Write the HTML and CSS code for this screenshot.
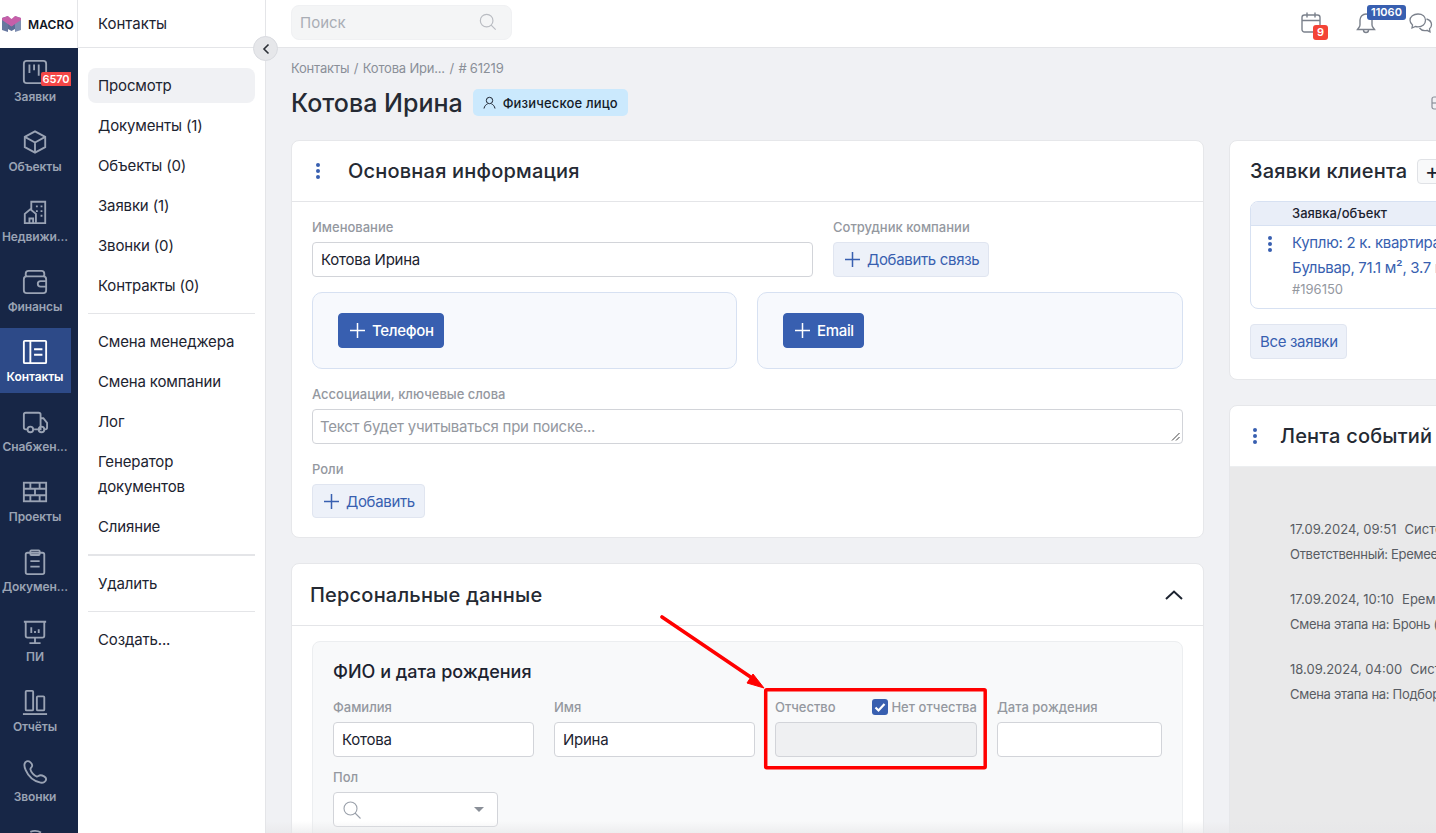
FILE: index.html
```html
<!DOCTYPE html>
<html lang="ru">
<head>
<meta charset="utf-8">
<title>Котова Ирина</title>
<link rel="stylesheet" href="styles.css">
</head>
<body>
<div class="app">
  <aside class="rail">
    <div class="logo">
      <svg width="21" height="18" viewBox="0 0 21 18"><path d="M1 3 L7 1 V17 L1 15Z" fill="#66779f"/><path d="M14 1 L20 3 V15 L14 17Z" fill="#7f8fb2"/><path d="M7 8 L10.500 11 L14 8 V14 L10.500 16 L7 14Z" fill="#5d6d96"/><path d="M1 3 L7 1 L10.500 4 L14 1 L20 3 V5 L10.500 11.500 L1 5Z" fill="#c65fa9"/></svg>
      <span class="logo-text">MACRO</span>
    </div>
    <nav class="rail-nav">
      <a class="rail-item">
        <svg class="ri" viewBox="0 0 28 28"><rect x="2" y="2" width="24" height="24" rx="3"/><path d="M8 6v9M13 6v6M18 6v12"/></svg>
        <span class="rail-badge">6570</span><span>Заявки</span>
      </a>
      <a class="rail-item">
        <svg class="ri" viewBox="0 0 28 28"><path d="M14 2.500 25 8.500v11L14 25.500 3 19.500v-11Z"/><path d="M3 8.500 14 14.500 25 8.500M14 14.500v11"/></svg>
        <span>Объекты</span>
      </a>
      <a class="rail-item">
        <svg class="ri" viewBox="0 0 28 28"><path d="M10 12V3h15v23H3V16l6-5 6 5v10M8 26v-5h4v5"/><path d="M15 8h2M20 8h2M15 13h2M20 13h2M20 18h2"/></svg>
        <span>Недвижи...</span>
      </a>
      <a class="rail-item">
        <svg class="ri" viewBox="0 0 28 28"><path d="M4 8V5a3 3 0 0 1 3-3h14a3 3 0 0 1 3 3v3M2 11a3 3 0 0 1 3-3h18a3 3 0 0 1 3 3v12a3 3 0 0 1-3 3H5a3 3 0 0 1-3-3Z"/><path d="M26 13h-6a3 3 0 0 0 0 6h6"/></svg>
        <span>Финансы</span>
      </a>
      <a class="rail-item active">
        <svg class="ri" viewBox="0 0 28 28"><rect x="2" y="2" width="24" height="24" rx="1"/><path d="M9 2v24M13 11h9M13 17h9"/></svg>
        <span>Контакты</span>
      </a>
      <a class="rail-item">
        <svg class="ri" viewBox="0 0 28 28"><path d="M6 22H4a2 2 0 0 1-2-2V6a2 2 0 0 1 2-2h14a2 2 0 0 1 2 2v16h-7M20 10h3l4 5v5a2 2 0 0 1-2 2h-1"/><circle cx="9" cy="22" r="3"/><circle cx="21" cy="22" r="3"/></svg>
        <span>Снабжен...</span>
      </a>
      <a class="rail-item">
        <svg class="ri" viewBox="0 0 28 28"><rect x="2" y="4" width="24" height="20"/><path d="M2 10.500h24M2 17.500h24M9 4v6.500M19 4v6.500M14 10.500v7M9 17.500v6.500M19 17.500v6.500"/></svg>
        <span>Проекты</span>
      </a>
      <a class="rail-item">
        <svg class="ri" viewBox="0 0 28 28"><rect x="4" y="4" width="20" height="23" rx="2"/><rect x="9" y="1.500" width="10" height="5" rx="1"/><path d="M9 13h10M9 19h10"/></svg>
        <span>Докумен...</span>
      </a>
      <a class="rail-item">
        <svg class="ri" viewBox="0 0 28 28"><path d="M2 3h24M4 3v15a2 2 0 0 0 2 2h16a2 2 0 0 0 2-2V3M14 20v5M8 26h12M10 9v6M14 13v2M18 11v4"/></svg>
        <span>ПИ</span>
      </a>
      <a class="rail-item">
        <svg class="ri" viewBox="0 0 28 28"><rect x="4" y="2" width="8" height="21" rx="1"/><rect x="16" y="8" width="8" height="15" rx="1"/><path d="M1 27h26"/></svg>
        <span>Отчёты</span>
      </a>
      <a class="rail-item">
        <svg class="ri" viewBox="0 0 28 28"><path d="M5 2.500 C2 3.500 2 8 4 12 C7 19 13 24 20 25.500 C23 26 26 24.500 26 21.500 C26 19.500 22 17.500 20 17.500 C18 17.500 17.500 19 16 19 C13 18 9.500 14 9 11 C9 9.500 11 9 11 7 C11 5 8 1.500 5 2.500Z"/></svg>
        <span>Звонки</span>
      </a>
      <a class="rail-item">
        <svg class="ri" viewBox="0 0 28 28"><circle cx="14" cy="14" r="12" stroke-dasharray="12 5"/></svg>
        <span>&nbsp;</span>
      </a>
    </nav>
  </aside>

  <aside class="side">
    <div class="side-head">Контакты</div>
    <nav class="side-nav">
      <a class="side-item current">Просмотр</a>
      <a class="side-item">Документы (1)</a>
      <a class="side-item">Объекты (0)</a>
      <a class="side-item">Заявки (1)</a>
      <a class="side-item">Звонки (0)</a>
      <a class="side-item">Контракты (0)</a>
      <hr class="side-sep">
      <a class="side-item">Смена менеджера</a>
      <a class="side-item">Смена компании</a>
      <a class="side-item">Лог</a>
      <a class="side-item">Генератор документов</a>
      <a class="side-item">Слияние</a>
      <hr class="side-sep thick">
      <a class="side-item">Удалить</a>
      <hr class="side-sep">
      <a class="side-item">Создать...</a>
    </nav>
    <button class="collapse"><svg width="10" height="12" viewBox="0 0 10 12"><path d="M7.500 1.500 3 6l4.500 4.500" fill="none" stroke="#2b2f36" stroke-width="1.600"/></svg></button>
  </aside>

  <div class="main">
    <header class="topbar">
      <div class="search">
        <span>Поиск</span>
        <svg width="18" height="18" viewBox="0 0 20 20"><circle cx="8.500" cy="8.500" r="7" fill="none" stroke="#b9bcc2" stroke-width="1.300"/><path d="m13.500 13.500 5 5" stroke="#b9bcc2" stroke-width="1.300"/></svg>
      </div>
      <div class="top-icons">
        <div class="top-icon cal">
          <svg width="20" height="22" viewBox="0 0 20 22"><rect x="1" y="3" width="18" height="17" rx="2.500" fill="none" stroke="#7b818c" stroke-width="1.400"/><path d="M1 8.500h18M6 .5v5M14 .5v5" fill="none" stroke="#7b818c" stroke-width="1.400"/></svg>
          <span class="badge red">9</span>
        </div>
        <div class="top-icon bell">
          <svg width="20" height="22" viewBox="0 0 20 22"><path d="M10 2a6 6 0 0 0-6 6v5c0 2-1.500 3-2.500 4.500h17C17.500 16 16 15 16 13V8a6 6 0 0 0-6-6Z" fill="none" stroke="#7b818c" stroke-width="1.400"/><path d="M7.500 18a2.500 2.500 0 0 0 5 0" fill="none" stroke="#7b818c" stroke-width="1.400"/></svg>
          <span class="badge blue">11060</span>
        </div>
        <div class="top-icon chat">
          <svg width="24" height="22" viewBox="0 0 24 22"><path d="M9 2c-4.500 0-8 2.700-8 6.300 0 1.900 1 3.500 2.500 4.700L3 16l3.500-1.500c.8.200 1.600.3 2.500.3 4.500 0 7.500-2.800 7.500-6.500S13.500 2 9 2Z" fill="none" stroke="#7b818c" stroke-width="1.300"/><path d="M17.500 7c3 .8 5 3 5 5.800 0 1.600-.7 3-2 4l.5 3-3-1.500c-3 .7-6-.3-7.500-2.300" fill="none" stroke="#7b818c" stroke-width="1.300"/></svg>
        </div>
      </div>
    </header>

    <div class="content">
      <div class="crumbs"><span>Контакты</span><span>/</span><span>Котова Ири...</span><span>/</span><span># 61219</span></div>
      <div class="title-row">
        <h1>Котова Ирина</h1>
        <span class="tag">
          <svg width="13" height="13" viewBox="0 0 13 13"><circle cx="6.500" cy="4.500" r="3.200" fill="none" stroke="#1c2330" stroke-width="1"/><path d="M1 12.500c.4-2.500 2-4 3.500-4.500M12 12.500c-.4-2.500-2-4-3.500-4.500" fill="none" stroke="#1c2330" stroke-width="1"/></svg>
          Физическое лицо
        </span>
        <svg class="title-tool" width="16" height="14" viewBox="0 0 16 14"><rect x="1" y="1" width="16" height="12" rx="2" fill="none" stroke="#8a8f98" stroke-width="1.200"/><path d="M1 7h16" stroke="#8a8f98" stroke-width="1.200"/></svg>
      </div>

      <div class="columns">
        <div class="col-left">
          <section class="card">
            <div class="card-head">
              <span class="dots"><i></i><i></i><i></i></span>
              <h2>Основная информация</h2>
            </div>
            <div class="card-body main-info">
              <div class="row-top">
                <div class="field name">
                  <label class="lbl">Именование</label>
                  <div class="input">Котова Ирина</div>
                </div>
                <div class="field">
                  <label class="lbl">Сотрудник компании</label>
                  <button class="btn light">
                    <svg class="plus" viewBox="0 0 16 16"><path d="M8 0v16M0 8h16"/></svg>Добавить связь
                  </button>
                </div>
              </div>
              <div class="panels">
                <div class="panel first"><button class="btn solid"><svg class="plus" viewBox="0 0 16 16"><path d="M8 0v16M0 8h16"/></svg>Телефон</button></div>
                <div class="panel"><button class="btn solid"><svg class="plus" viewBox="0 0 16 16"><path d="M8 0v16M0 8h16"/></svg>Email</button></div>
              </div>
              <div class="field assoc">
                <label class="lbl">Ассоциации, ключевые слова</label>
                <div class="input textarea">Текст будет учитываться при поиске...
                  <svg class="grip" width="9" height="9" viewBox="0 0 9 9"><path d="M8.500 1 1 8.500M8.500 5 5 8.500" stroke="#444" stroke-width="1"/></svg>
                </div>
              </div>
              <div class="field roles">
                <label class="lbl">Роли</label>
                <button class="btn light short"><svg class="plus" viewBox="0 0 16 16"><path d="M8 0v16M0 8h16"/></svg>Добавить</button>
              </div>
            </div>
          </section>

          <section class="card personal">
            <div class="card-head spread">
              <h2>Персональные данные</h2>
              <svg width="18" height="10" viewBox="0 0 18 10"><path d="M1 9l8-7.500L17 9" fill="none" stroke="#1c2330" stroke-width="2"/></svg>
            </div>
            <div class="card-body">
              <div class="inner">
                <h3>ФИО и дата рождения</h3>
                <div class="fio">
                  <div class="field">
                    <label class="lbl">Фамилия</label>
                    <div class="input">Котова</div>
                  </div>
                  <div class="field">
                    <label class="lbl">Имя</label>
                    <div class="input">Ирина</div>
                  </div>
                  <div class="field">
                    <div class="lbl-row">
                      <label class="lbl">Отчество</label>
                      <label class="lbl check">
                        <svg width="16" height="16" viewBox="0 0 16 16"><rect width="16" height="16" rx="3" fill="#385fb0"/><path d="M3.500 8.500 6.500 11.500 12.500 5" fill="none" stroke="#fff" stroke-width="2.200"/></svg>
                        Нет отчества
                      </label>
                    </div>
                    <div class="input disabled"></div>
                  </div>
                  <div class="field">
                    <label class="lbl">Дата рождения</label>
                    <div class="input"></div>
                  </div>
                </div>
                <div class="field gender">
                  <label class="lbl">Пол</label>
                  <div class="input select">
                    <svg width="18" height="18" viewBox="0 0 18 18"><circle cx="7.500" cy="7.500" r="6.500" fill="none" stroke="#9aa0aa" stroke-width="1.100"/><path d="m12 12 5.500 5.500" stroke="#9aa0aa" stroke-width="1.100"/></svg>
                    <span class="caret"></span>
                  </div>
                </div>
              </div>
            </div>
          </section>
        </div>

        <div class="col-right">
          <section class="card">
            <div class="requests">
              <div class="req-title"><h2>Заявки клиента</h2><button class="mini-plus">+</button></div>
              <div class="req-table">
                <div class="req-headrow">Заявка/объект</div>
                <div class="req-row">
                  <span class="dots"><i></i><i></i><i></i></span>
                  <div class="req-text">
                    <a>Куплю: 2 к. квартира, ЖК Центральный</a>
                    <a>Бульвар, 71.1 м², 3.7 млн</a>
                    <span class="req-id">#196150</span>
                  </div>
                </div>
              </div>
              <button class="btn light all">Все заявки</button>
            </div>
          </section>

          <section class="card feed">
            <div class="card-head">
              <span class="dots"><i></i><i></i><i></i></span>
              <h2>Лента событий</h2>
            </div>
            <div class="feed-body">
              <div class="event"><p class="ev-meta"><span>17.09.2024, 09:51</span><span>Система</span></p><p class="ev-text">Ответственный: Еремеева Анна</p></div>
              <div class="event"><p class="ev-meta"><span>17.09.2024, 10:10</span><span>Еремеева</span></p><p class="ev-text">Смена этапа на: Бронь (Заявка)</p></div>
              <div class="event"><p class="ev-meta"><span>18.09.2024, 04:00</span><span>Система</span></p><p class="ev-text">Смена этапа на: Подбор объекта</p></div>
            </div>
          </section>
        </div>
      </div>
    </div>
  </div>
</div>

<svg class="annot" width="340" height="170" viewBox="0 0 340 170">
  <path d="M2 2 L95 65" stroke="#ff0000" stroke-width="3.600" stroke-linecap="round"/>
  <path d="M104 73 L87 68 L93 59Z" fill="#ff0000" stroke="#ff0000" stroke-width="1"/>
  <rect x="105.700" y="74.700" width="219.500" height="78" rx="1" fill="none" stroke="#ff0000" stroke-width="3.500"/>
</svg>
<div class="fade"></div>
</body>
</html>
```

FILE: styles.css
```css
* { box-sizing: border-box; }
html, body { margin: 0; height: 100%; overflow: hidden; }
body { font-family: Inter, "Noto Sans", sans-serif; font-size: 15px; color: #1c2330; background: #f0f1f4; }
h1, h2, h3, p { margin: 0; font-weight: 400; }
button { font: inherit; }
.app { display: flex; height: 833px; overflow: hidden; }

/* rail */
.rail { flex: 0 0 78px; display: flex; flex-direction: column; background: #172646; overflow: hidden; }
.logo { flex: 0 0 48px; display: flex; align-items: center; gap: 6px; padding-left: 1px; background: #fff; }
.logo-text { font-size: 12px; font-weight: 600; color: #10151f; letter-spacing: .1px; }
.rail-nav { display: flex; flex-direction: column; width: 71px; flex: none; }
.rail-item { position: relative; flex: 0 0 70px; height: 70px; display: flex; flex-direction: column; align-items: center; padding: 11px 1px 0 0; color: #9aa3b4; font-size: 12px; font-weight: 600; line-height: 15px; letter-spacing: -.1px; white-space: nowrap; }
.rail-item > span:last-child { margin-top: 4px; }
.rail-item.active { color: #fff; background: #2d4a88; height: 65px; flex-basis: 65px; margin-bottom: 5px; margin-top: 0; }
.rail-item.active .ri { stroke: #fff; }
.ri { width: 26px; height: 26px; fill: none; stroke: #9aa3b4; stroke-width: 2; }
.rail-badge { position: absolute; top: 24px; right: 0; width: 30px; height: 14px; background: #f44747; color: #fff; font-size: 11px; line-height: 14px; text-align: center; border-radius: 2px 0 0 2px; }

/* side menu */
.side { position: relative; flex: 0 0 188px; background: #fff; border-right: 1px solid #e4e5e8; }
.side-head { height: 48px; padding: 0 20px; display: flex; align-items: center; font-size: 15px; border-bottom: 1px solid #e4e5e8; border-left: 1px solid #e4e5e8; margin-left: -1px; }
.side-nav { display: flex; flex-direction: column; padding: 20px 10px; }
.side-item { display: block; padding: 5px 10px; font-size: 15px; line-height: 25px; min-height: 35px; margin-bottom: 5px; color: #1c2330; border-radius: 8px; letter-spacing: -.15px; }
.side-item.current { background: #f0f1f4; }
.side-sep { width: 100%; margin: 5px 0 10px; border: 0; border-top: 1px solid #e4e5e8; }
.side-sep.thick { border-top-width: 2px; margin-top: 5px; }
.collapse { position: absolute; top: 36px; right: -13px; z-index: 3; width: 25px; height: 25px; padding: 0; display: flex; align-items: center; justify-content: center; border-radius: 50%; border: 1px solid #d9dbe0; background: #e6e7ea; }

/* main */
.main { flex: 1; min-width: 0; display: flex; flex-direction: column; overflow: hidden; }
.topbar { flex: 0 0 48px; display: flex; align-items: center; justify-content: space-between; padding-left: 25px; background: #fff; border-bottom: 1px solid #e4e5e8; }
.search { width: 221px; height: 35px; margin-top: -3px; padding: 0 14px 0 8px; display: flex; align-items: center; justify-content: space-between; background: #f4f5f6; border: 1px solid #f0f1f3; border-radius: 8px; color: #a9adb5; font-size: 15px; }
.top-icons { display: flex; align-items: center; width: 136px; padding-left: 1px; flex: none; height: 100%; }
.top-icon { position: relative; display: flex; }
.cal { margin-right: 35px; margin-top: -2px; }
.bell { margin-right: 33px; margin-top: -2px; }
.chat { margin-top: -2px; }
.badge { position: absolute; color: #fff; font-size: 11px; font-weight: 600; line-height: 15px; text-align: center; border-radius: 3px; }
.badge.red { left: 12px; top: 13px; width: 15px; background: #f44336; }
.badge.blue { left: 11px; top: -7px; width: 39px; background: #385fb0; }

.content { flex: 1; padding: 10px 0 0 25px; width: 1400px; }
.crumbs { display: flex; gap: 4.500px; height: 20px; align-items: center; font-size: 13px; letter-spacing: -.2px; color: #8a8f98; }
.title-row { position: relative; display: flex; align-items: center; gap: 10px; height: 32px; margin-top: 9px; }
h1 { font-size: 25px; line-height: 32px; font-weight: 500; color: #252a33; }
.tag { display: flex; align-items: center; gap: 7px; height: 27px; padding: 0 10px; margin-top: -1px; font-size: 13px; font-weight: 500; letter-spacing: .15px; background: #cbe9fd; border-radius: 5px; color: #141b28; }
.title-tool { position: absolute; left: 1140px; top: 9px; }
.columns { display: flex; gap: 25px; margin-top: 21px; align-items: flex-start; }
.col-left { flex: 0 0 913px; display: flex; flex-direction: column; gap: 25px; }
.col-right { flex: 0 0 420px; display: flex; flex-direction: column; gap: 25px; }

.card { background: #fff; border: 1px solid #e6e7ea; border-radius: 8px; }
.card-head { display: flex; align-items: center; gap: 22px; height: 61px; padding: 0 20px 0 18px; border-bottom: 1px solid #e4e5e8; }
.card-head.spread { justify-content: space-between; height: 62px; padding-left: 18px; }
h2 { font-size: 20px; line-height: 28px; font-weight: 500; letter-spacing: .2px; color: #252a33; }
.dots { display: flex; flex-direction: column; gap: 2px; width: 16px; align-items: center; flex: none; }
.dots i { width: 4px; height: 4px; border-radius: 50%; background: #385fb0; }
.card-body { padding: 15px 20px 20px; }
.card-body.main-info { padding-bottom: 19px; }
.lbl { display: block; font-size: 13px; line-height: 16px; font-weight: 500; color: #94989f; }
.field { display: flex; flex-direction: column; gap: 7px; }
.input { height: 35px; padding: 0 8px; display: flex; align-items: center; background: #fff; border: 1px solid #d2d4d9; border-radius: 4px; font-size: 15px; letter-spacing: -.25px; color: #1c2330; }
.row-top { display: flex; gap: 20px; margin-top: 2px; }
.row-top .name { flex: 0 0 501px; }
.btn { display: inline-flex; align-items: center; gap: 7px; height: 35px; padding: 0 9px 0 11px; border-radius: 4px; font-size: 15px; letter-spacing: -.33px; cursor: pointer; }
.btn.light { background: #edf1f9; border: 1px solid #e0e5f0; color: #385fb0; }
.btn.short { height: 34px; }
.btn.solid { background: #385fb0; border: 1px solid #385fb0; color: #fff; font-weight: 500; }
.plus { width: 15px; height: 15px; fill: none; stroke: currentColor; stroke-width: 1.600; flex: none; }
.field > .btn { align-self: flex-start; }
.panels { display: flex; gap: 20px; margin-top: 15px; }
.panel { flex: 1; height: 77px; padding: 20px 25px; background: #f7f9fd; border: 1px solid #d7e1f2; border-radius: 10px; }
.panel.first { flex: 0 0 425px; }
.assoc { margin-top: 17px; }
.textarea { position: relative; padding: 0 7px; color: #94989f; }
.grip { position: absolute; right: 2px; bottom: 2px; }
.roles { margin-top: 17px; }

.inner { padding: 19px 20px 20px; background: #f8f9fa; border: 1px solid #eceef0; border-radius: 8px; }
h3 { font-size: 18px; line-height: 22px; font-weight: 500; color: #1c2330; }
.fio { display: grid; grid-template-columns: 201px 201px 202px 165px; gap: 20px; margin-top: 16px; }
.lbl-row { display: flex; justify-content: space-between; align-items: center; height: 16px; }
.check { display: flex; align-items: center; gap: 3px; white-space: nowrap; letter-spacing: .05px; }
.disabled { background: #eff0f2; }
.gender { width: 165px; margin-top: 12px; }
.select { justify-content: space-between; padding: 0 13px 0 9px; }
.caret { width: 0; height: 0; border: 5px solid transparent; border-top: 5px solid #8a8f98; border-bottom: 0; }

.requests { padding: 15px 20px 20px; height: 238px; }
.req-title { display: flex; align-items: center; gap: 10px; height: 30px; }
.mini-plus { width: 30px; height: 25px; padding: 0; background: #f8f9fa; border: 1px solid #e0e2e6; border-radius: 4px; font-size: 22px; line-height: 20px; color: #1c2330; }
.req-table { margin-top: 15px; border: 1px solid #d7e1f2; border-radius: 8px; overflow: hidden; height: 108px; }
.req-headrow { height: 24px; padding-left: 41px; background: #e9eef8; border-bottom: 1px solid #d7e1f2; font-size: 13px; font-weight: 500; line-height: 23px; }
.req-row { display: flex; gap: 14px; padding: 4px 0 0 11px; }
.req-row .dots { margin-top: 6px; }
.req-text { display: flex; flex-direction: column; white-space: nowrap; color: #385fb0; font-size: 15px; letter-spacing: -.3px; line-height: 25px; }
.req-id { font-size: 13px; letter-spacing: 0; color: #94989f; line-height: 18px; }
.btn.all { margin-top: 15px; padding: 0 8px 0 9px; }

.feed .card-head { gap: 17px; padding-left: 17px; border-bottom: 1px solid #eceef0; }
.feed-body { height: 400px; padding: 50px 0 0 60px; background: #e9e9ea; white-space: nowrap; font-size: 13px; color: #585c63; }
.event { margin-bottom: 20px; }
.event p { line-height: 25px; }
.ev-meta span:first-child { margin-right: 8px; }
.ev-text { letter-spacing: -.3px; }

/* annotation: free overlay on top of the screenshot */
.annot { position: absolute; left: 660px; top: 615px; z-index: 5; }
.fade { position: absolute; left: 266px; right: 0; bottom: 0; height: 12px; z-index: 4; background: linear-gradient(to bottom, rgba(230,230,232,0), rgba(230,230,232,.6)); }
```
